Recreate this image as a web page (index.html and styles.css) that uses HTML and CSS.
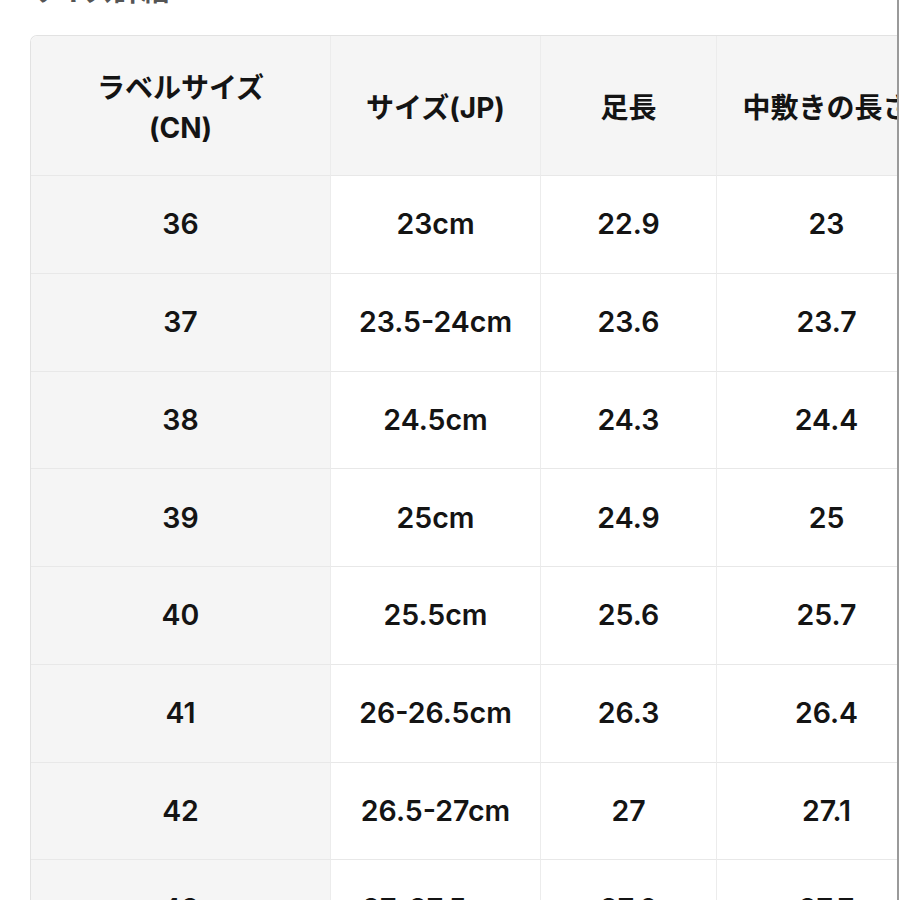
FILE: index.html
```html
<!DOCTYPE html>
<html lang="ja">
<head>
<meta charset="utf-8">
<title>サイズ表</title>
<link rel="stylesheet" href="styles.css">
</head>
<body>
<div class="page">
  <h1 class="title">サイズ詳細</h1>
  <div class="table-wrap">
    <table class="size-table">
      <colgroup>
        <col class="c1"><col class="c2"><col class="c3"><col class="c4"><col class="c5">
      </colgroup>
      <thead>
        <tr>
          <th>ラベルサイズ<br>(CN)</th>
          <th>サイズ(JP)</th>
          <th>足長</th>
          <th>中敷きの長さ</th>
          <th>足幅</th>
        </tr>
      </thead>
      <tbody>
        <tr><td>36</td><td>23cm</td><td>22.9</td><td>23</td><td>8.8</td></tr>
        <tr><td>37</td><td>23.5-24cm</td><td>23.6</td><td>23.7</td><td>9</td></tr>
        <tr><td>38</td><td>24.5cm</td><td>24.3</td><td>24.4</td><td>9.2</td></tr>
        <tr><td>39</td><td>25cm</td><td>24.9</td><td>25</td><td>9.4</td></tr>
        <tr><td>40</td><td>25.5cm</td><td>25.6</td><td>25.7</td><td>9.6</td></tr>
        <tr><td>41</td><td>26-26.5cm</td><td>26.3</td><td>26.4</td><td>9.8</td></tr>
        <tr><td>42</td><td>26.5-27cm</td><td>27</td><td>27.1</td><td>10</td></tr>
        <tr><td>43</td><td>27-27.5cm</td><td>27.6</td><td>27.7</td><td>10.2</td></tr>
      </tbody>
    </table>
  </div>
</div>
</body>
</html>
```

FILE: styles.css
```css
html, body {
  margin: 0;
  padding: 0;
  background: #ffffff;
}

.page {
  width: 897px;
  height: 900px;
  overflow: hidden;
  border-right: 2px solid #9a9a9a;
  font-family: Inter, "Noto Sans CJK JP", sans-serif;
  color: #141414;
}

.title {
  margin: -23px 0 0 30px;
  font-size: 28px;
  line-height: 28px;
  font-weight: 700;
  color: #555555;
  height: 28px;
}

.table-wrap {
  margin-top: 30px;
  padding-left: 30px;
}

.size-table {
  table-layout: fixed;
  width: 1107px;
  border-collapse: separate;
  border-spacing: 0;
  border-top: 1px solid #e2e2e2;
  border-left: 1px solid #e2e2e2;
  border-top-left-radius: 7px;
  overflow: hidden;
}

.c1 { width: 300px; }
.c2 { width: 210px; }
.c3 { width: 176px; }
.c4 { width: 220px; }
.c5 { width: 200px; }

.size-table th,
.size-table td {
  border-right: 1px solid #ececec;
  border-bottom: 1px solid #e8e8e8;
  text-align: center;
  vertical-align: middle;
  padding: 0;
  white-space: nowrap;
  font-weight: 600;
}

.size-table thead tr {
  height: 140px;
}

.size-table th {
  background: #f5f5f5;
  font-size: 28px;
  line-height: 40px;
  padding-top: 4px;
  font-weight: 700;
}

.size-table tbody tr {
  height: 97.75px;
}

.size-table td {
  font-size: 28.5px;
  line-height: 36px;
  background: #ffffff;
}

.size-table td:first-child {
  background: #f5f5f5;
}
```
